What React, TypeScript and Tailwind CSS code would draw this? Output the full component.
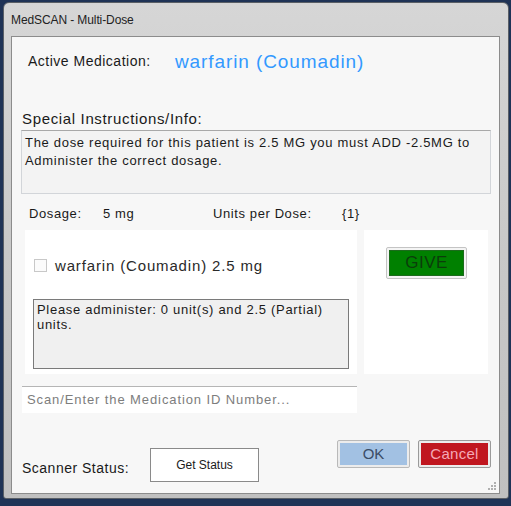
export default function App() {
  return (
    <div
      className="w-[511px] h-[506px] bg-[#1f3356] pt-[2px] pl-[3px] overflow-hidden"
      style={{ fontFamily: '"Liberation Sans", Arial, sans-serif' }}
    >
      {/* window frame */}
      <div className="w-[506px] h-[497px] rounded-t-[6px] rounded-b-[3px] border border-[#5a5f66] bg-gradient-to-b from-[#d6d6d6] via-[#c8c8c8] to-[#c0c0c0] flex flex-col">
        {/* title bar */}
        <div className="h-[33px] flex items-center pl-[7px] text-[12px] text-[#222] tracking-[-0.1px]">
          MedSCAN - Multi-Dose
        </div>

        {/* client area */}
        <div className="ml-[7px] w-[489px] h-[458px] border border-[#8c8c8c] bg-[#f7f7f7] flex flex-col">
          {/* active medication */}
          <div className="h-[50px] flex items-center pl-[16px]">
            <span className="w-[147px] text-[14px] tracking-[0.5px] text-[#1a1a1a]">Active Medication:</span>
            <span className="text-[19px] tracking-[0.9px] text-[#3399ff]">warfarin (Coumadin)</span>
          </div>

          <div className="mt-[23px] pl-[10px] h-[18px] leading-[18px] text-[15px] tracking-[0.65px] text-[#1a1a1a]">
            Special Instructions/Info:
          </div>

          {/* instructions box */}
          <div className="mt-[2px] ml-[9px] w-[470px] h-[64px] border border-[#d2d5d9] border-t-[#a8a8a8] bg-[#f3f3f3] px-[3px] pt-[3px] text-[13px] leading-[18px] tracking-[0.7px] text-[#1a1a1a]">
            The dose required for this patient is 2.5 MG you must ADD -2.5MG to Administer the correct dosage.
          </div>

          {/* dosage row */}
          <div className="mt-[11px] h-[18px] flex items-center text-[13px] tracking-[0.6px] text-[#1a1a1a]">
            <span className="pl-[17px] w-[91px]">Dosage:</span>
            <span className="w-[110px]">5 mg</span>
            <span className="w-[129px]">Units per Dose:</span>
            <span>{'{1}'}</span>
          </div>

          {/* panels */}
          <div className="mt-[7px] h-[145px] flex gap-[7px] pl-[13px]">
            <div className="w-[332px] bg-white pl-[9px] pt-[29px]">
              <div className="flex items-center h-[14px]">
                <span className="w-[13px] h-[13px] border border-[#c8c8c8] bg-[#fbfbfb]" />
                <span className="ml-[8px] text-[15px] tracking-[0.85px] text-[#2a2a2a] leading-[18px]">
                  warfarin (Coumadin) 2.5 mg
                </span>
              </div>
              <div className="mt-[26px] -ml-[1px] w-[316px] h-[70px] border border-[#7a7a7a] bg-[#f0f0f0] px-[3px] pt-[2px] text-[13px] leading-[15px] tracking-[0.7px] text-[#1a1a1a]">
                Please administer: 0 unit(s) and 2.5 (Partial) units.
              </div>
            </div>
            <div className="w-[124px] bg-white pl-[22px] pt-[17px]">
              <div className="w-[81px] h-[32px] border border-[#c4c4c4] rounded-[2px] bg-[#f4f4f4] p-[2px]">
                <div className="h-full bg-[#008000] border border-[#1c6b1c] flex items-center justify-center text-[17px] tracking-[0.5px] text-[#0b3d0b]">
                  GIVE
                </div>
              </div>
            </div>
          </div>

          {/* scan input */}
          <div className="mt-[12px] ml-[10px] w-[335px] h-[27px] bg-white border-t border-[#b5b5b5] flex items-center pl-[5px] text-[13px] tracking-[0.9px] text-[#7d7d7d]">
            Scan/Enter the Medication ID Number...
          </div>

          {/* bottom row */}
          <div className="mt-[27px] flex pl-[10px]">
            <span className="mt-[18px] w-[128px] text-[14px] tracking-[0.5px] text-[#1a1a1a]">Scanner Status:</span>
            <div className="mt-[8px] w-[109px] h-[34px] border border-[#8a8a8a] bg-white flex items-center justify-center text-[12px] text-[#1a1a1a]">
              Get Status
            </div>
            <div className="ml-[78px] w-[73px] h-[28px] border border-[#b9b9b9] rounded-[2px] bg-[#ececec] p-[2px]">
              <div className="h-full bg-[#a2c1e3] flex items-center justify-center text-[15px] text-[#3b4c66]">
                OK
              </div>
            </div>
            <div className="ml-[8px] w-[73px] h-[28px] border border-[#9a9a9a] rounded-[2px] bg-[#ececec] p-[2px]">
              <div className="h-full bg-[#c0161f] flex items-center justify-center text-[15px] tracking-[0.3px] text-[#f4a9b6]">
                Cancel
              </div>
            </div>
          </div>

          {/* resize grip */}
          <div className="mt-auto self-end mr-[3px] mb-[3px] grid grid-cols-3 gap-[1px] w-[8px] h-[8px]">
            <span />
            <span />
            <span className="bg-[#b0b0b0]" />
            <span />
            <span className="bg-[#b0b0b0]" />
            <span className="bg-[#b0b0b0]" />
            <span className="bg-[#b0b0b0]" />
            <span className="bg-[#b0b0b0]" />
            <span className="bg-[#b0b0b0]" />
          </div>
        </div>
      </div>
    </div>
  );
}
